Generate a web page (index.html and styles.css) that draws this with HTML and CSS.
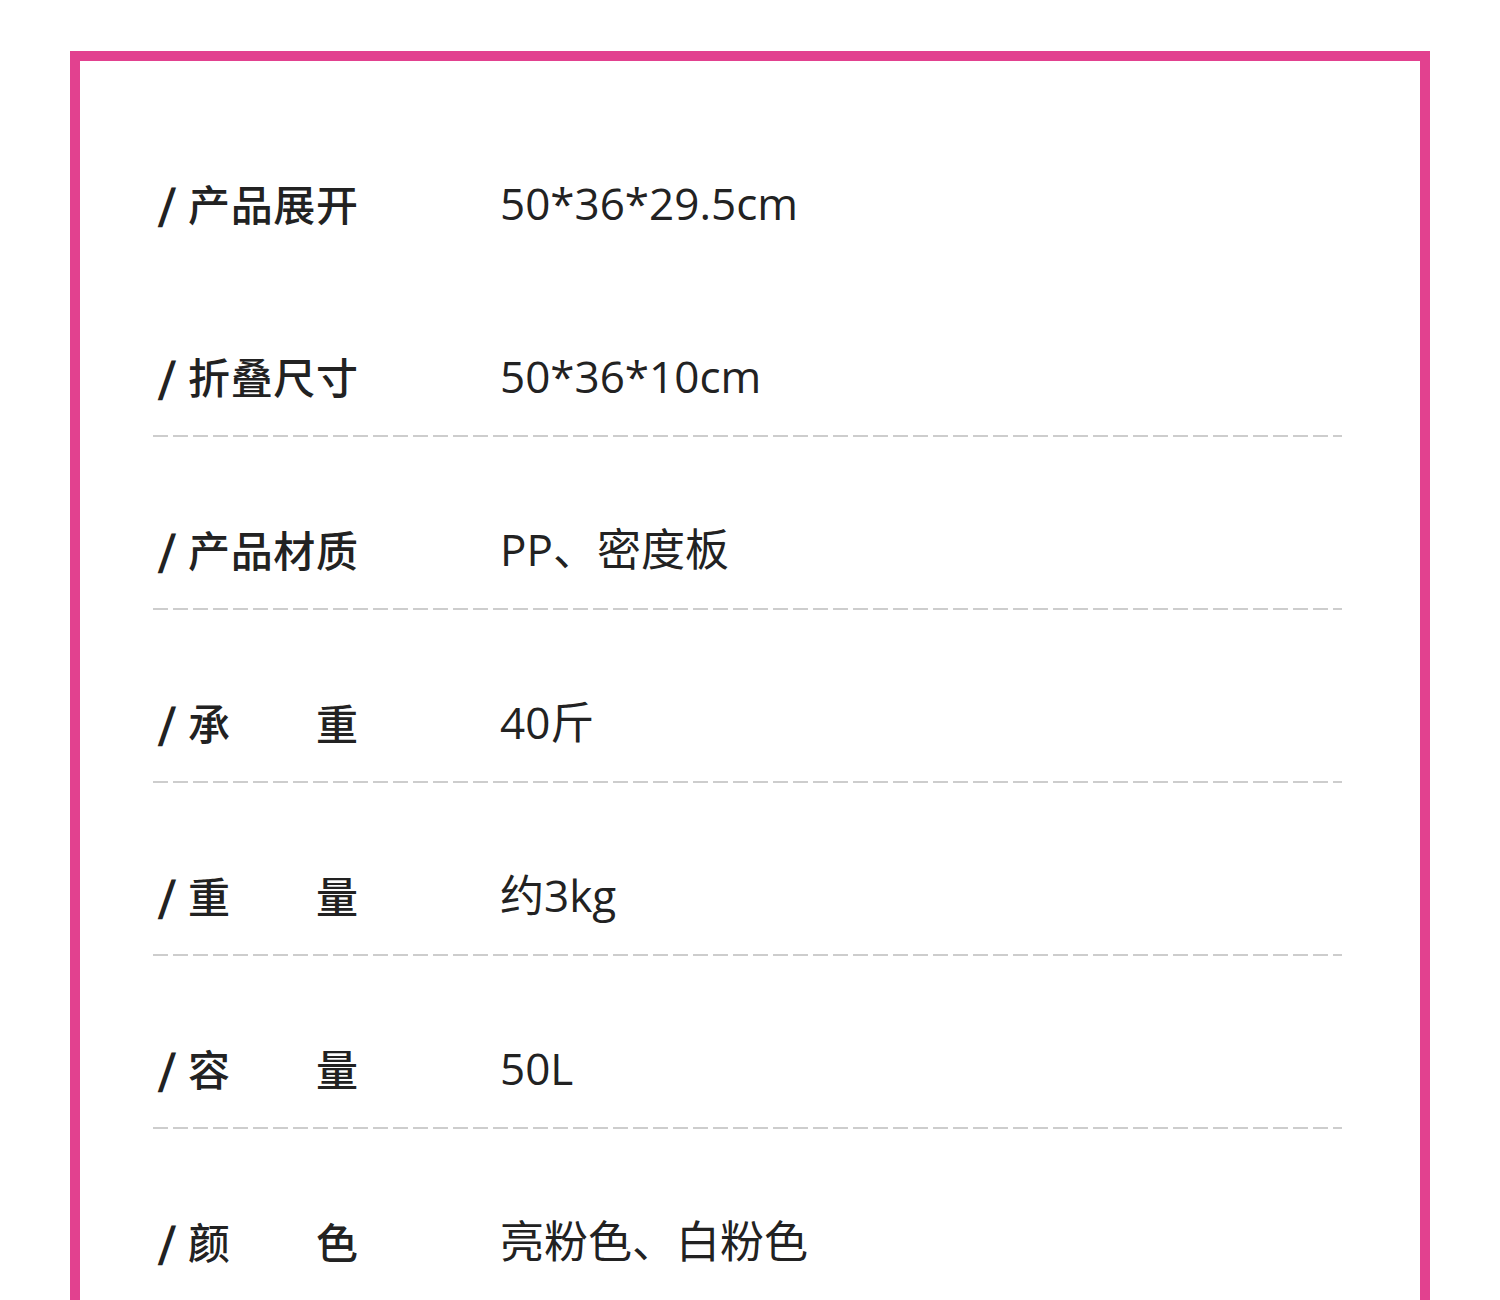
FILE: index.html
```html
<!DOCTYPE html>
<html lang="zh">
<head>
<meta charset="utf-8">
<title>产品参数</title>
<link rel="stylesheet" href="styles.css">
</head>
<body>
<div class="frame">
  <div class="row first">
    <div class="label"><span class="slash">/</span><span class="name"><span>产</span><span>品</span><span>展</span><span>开</span></span></div>
    <div class="value">50*36*29.5cm</div>
  </div>
  <div class="row">
    <div class="label"><span class="slash">/</span><span class="name"><span>折</span><span>叠</span><span>尺</span><span>寸</span></span></div>
    <div class="value">50*36*10cm</div>
  </div>
  <div class="row">
    <div class="label"><span class="slash">/</span><span class="name"><span>产</span><span>品</span><span>材</span><span>质</span></span></div>
    <div class="value">PP、密度板</div>
  </div>
  <div class="row">
    <div class="label"><span class="slash">/</span><span class="name"><span>承</span><span>重</span></span></div>
    <div class="value">40斤</div>
  </div>
  <div class="row">
    <div class="label"><span class="slash">/</span><span class="name"><span>重</span><span>量</span></span></div>
    <div class="value">约3kg</div>
  </div>
  <div class="row">
    <div class="label"><span class="slash">/</span><span class="name"><span>容</span><span>量</span></span></div>
    <div class="value">50L</div>
  </div>
  <div class="row">
    <div class="label"><span class="slash">/</span><span class="name"><span>颜</span><span>色</span></span></div>
    <div class="value">亮粉色、白粉色</div>
  </div>
</div>
</body>
</html>
```

FILE: styles.css
```css
html, body {
  margin: 0;
  padding: 0;
  background: #ffffff;
}

body {
  font-family: "Noto Sans CJK SC", "Noto Sans", sans-serif;
  color: #222222;
  height: 1300px;
  overflow: hidden;
}

.frame {
  margin: 51px 0 0 70px;
  width: 1340px;
  border: 10px solid #e2418f;
  border-bottom: none;
  padding-top: 30px;
  height: 1400px;
}

.row {
  display: flex;
  align-items: center;
  margin: 0 78px 0 73px;
  padding: 86px 0 35px 7px;
  height: 52px;
  line-height: 52px;
  background-image: repeating-linear-gradient(to right, #cdcdcd 0 15px, transparent 15px 20px);
  background-size: 100% 2px;
  background-repeat: no-repeat;
  background-position: left bottom;
}

.row.first {
  background-image: none;
}

.label {
  width: 340px;
  flex: none;
  display: flex;
  align-items: center;
  font-size: 42px;
  font-weight: 500;
}

.slash {
  display: inline-block;
  width: 28px;
  font-weight: 900;
  font-size: 40px;
  transform: skewX(-7deg);
  transform-origin: 8px 50%;
}

.name {
  width: 170px;
  display: flex;
  justify-content: space-between;
}

.value {
  font-family: "Open Sans", "Noto Sans CJK SC", sans-serif;
  font-size: 44px;
  font-weight: 400;
}
```
